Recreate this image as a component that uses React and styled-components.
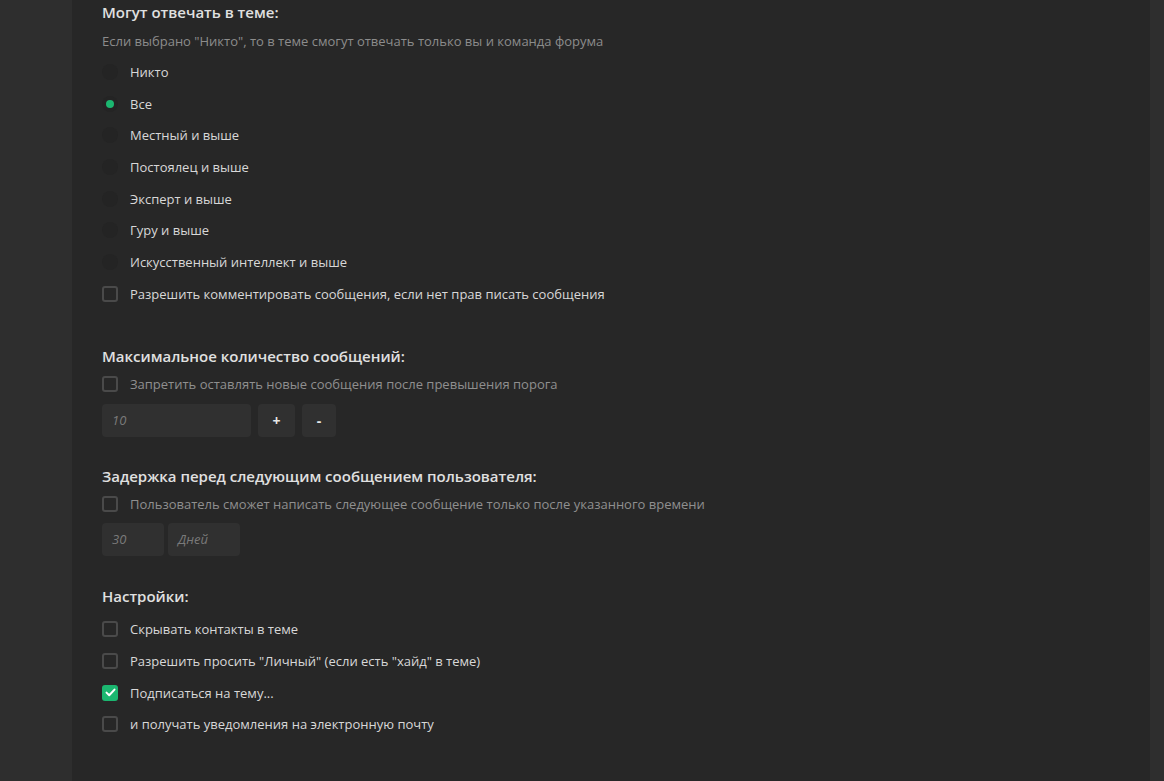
import React from 'react';
import styled, { createGlobalStyle } from 'styled-components';

const GlobalStyle = createGlobalStyle`
    body {
        margin: 0;
        background: #2e2e2e;
        font-family: "Open Sans", "Noto Sans", sans-serif;
    }
`;

const Page = styled.div`
    display: flex;
    min-height: 781px;
`;

const Panel = styled.main`
    margin-left: 72px;
    width: 1078px;
    background: #272727;
    padding: 2px 30px 40px;
    box-sizing: border-box;
`;

const Section = styled.section`
    display: flex;
    flex-direction: column;
    margin-top: ${p => p.$gap || 0}px;
`;

const Title = styled.h3`
    margin: 0;
    font-size: 15px;
    line-height: 20px;
    font-weight: 600;
    color: #e0e0e0;
`;

const Hint = styled.p`
    margin: 10px 0 6px;
    font-size: 13px;
    line-height: 18px;
    color: #8c8c8c;
`;

const Row = styled.label`
    display: flex;
    align-items: center;
    gap: 12px;
    height: ${p => p.$h || 31.7}px;
    margin-top: ${p => p.$top || 0}px;
    font-size: 13px;
    color: ${p => p.$muted ? '#8f8f8f' : '#d8d8d8'};
    cursor: pointer;
`;

const Radio = styled.span`
    width: 16px;
    height: 16px;
    border-radius: 50%;
    background: #242424;
    display: flex;
    align-items: center;
    justify-content: center;
    flex-shrink: 0;

    &::after {
        content: '';
        width: 8px;
        height: 8px;
        border-radius: 50%;
        background: #1bb770;
        display: ${p => p.$on ? 'block' : 'none'};
    }
`;

const Box = styled.span`
    width: 16px;
    height: 16px;
    box-sizing: border-box;
    border-radius: 3px;
    border: ${p => p.$on ? 'none' : '2px solid #4a4a4a'};
    background: ${p => p.$on ? '#1bb770' : 'transparent'};
    display: flex;
    align-items: center;
    justify-content: center;
    flex-shrink: 0;
`;

const Controls = styled.div`
    display: flex;
    gap: ${p => p.$gap || 7}px;
    margin-top: ${p => p.$top || 6}px;
`;

const Field = styled.div`
    width: ${p => p.$w}px;
    height: 33px;
    border-radius: 4px;
    background: #303030;
    color: #7a7a7a;
    font-style: italic;
    font-size: 13px;
    display: flex;
    align-items: center;
    padding-left: 10px;
    box-sizing: border-box;
`;

const Step = styled.button`
    width: ${p => p.$w}px;
    height: 33px;
    border: none;
    border-radius: 4px;
    background: #303030;
    color: #e6e6e6;
    font-family: inherit;
    font-weight: 700;
    font-size: 14px;
    padding: 0;
`;

const Check = () => (
    <svg width="11" height="9" viewBox="0 0 11 9">
        <path d="M1.5 4.6 L4.2 7.2 L9.5 1.6" fill="none" stroke="#fff" strokeWidth="2" strokeLinecap="round" strokeLinejoin="round" />
    </svg>
);

const CheckRow = ({ on, muted, h, top, children }) => (
    <Row $muted={muted} $h={h} $top={top}>
        <Box $on={on}>{on && <Check />}</Box>
        {children}
    </Row>
);

const options = [
    'Никто',
    'Все',
    'Местный и выше',
    'Постоялец и выше',
    'Эксперт и выше',
    'Гуру и выше',
    'Искусственный интеллект и выше',
];

export default function App() {
    return (
        <Page>
            <GlobalStyle />
            <Panel>
                <Section>
                    <Title>Могут отвечать в теме:</Title>
                    <Hint>Если выбрано "Никто", то в теме смогут отвечать только вы и команда форума</Hint>
                    {options.map((o, i) => (
                        <Row key={o}>
                            <Radio $on={i === 1} />
                            {o}
                        </Row>
                    ))}
                    <CheckRow>Разрешить комментировать сообщения, если нет прав писать сообщения</CheckRow>
                </Section>

                <Section $gap={36}>
                    <Title>Максимальное количество сообщений:</Title>
                    <CheckRow muted h={28} top={4}>Запретить оставлять новые сообщения после превышения порога</CheckRow>
                    <Controls>
                        <Field $w={149}>10</Field>
                        <Step $w={37}>+</Step>
                        <Step $w={34}>-</Step>
                    </Controls>
                </Section>

                <Section $gap={29}>
                    <Title>Задержка перед следующим сообщением пользователя:</Title>
                    <CheckRow muted h={28} top={4}>Пользователь сможет написать следующее сообщение только после указанного времени</CheckRow>
                    <Controls $top={5} $gap={4}>
                        <Field $w={62}>30</Field>
                        <Field $w={72}>Дней</Field>
                    </Controls>
                </Section>

                <Section $gap={30}>
                    <Title>Настройки:</Title>
                    <CheckRow top={8}>Скрывать контакты в теме</CheckRow>
                    <CheckRow>Разрешить просить "Личный" (если есть "хайд" в теме)</CheckRow>
                    <CheckRow on>Подписаться на тему...</CheckRow>
                    <CheckRow>и получать уведомления на электронную почту</CheckRow>
                </Section>
            </Panel>
        </Page>
    );
}
